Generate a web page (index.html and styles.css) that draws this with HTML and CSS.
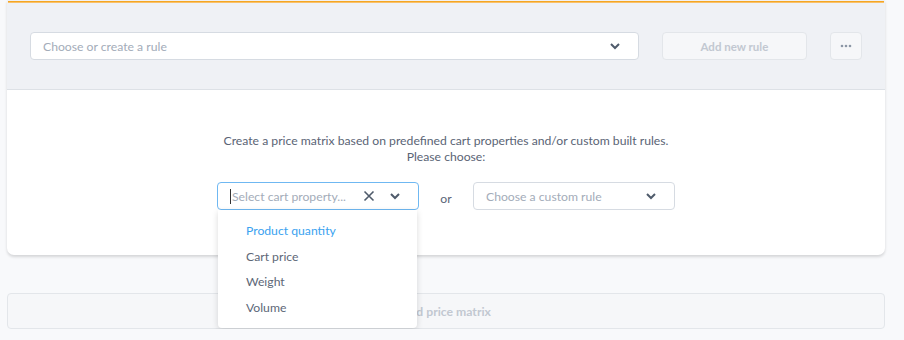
FILE: index.html
```html
<!DOCTYPE html>
<html lang="en">
<head>
  <meta charset="UTF-8" />
  <title>Price matrix</title>
  <link rel="stylesheet" href="styles.css">
</head>
<body>

  <div class="page">
    <div class="card">
      <div class="card-head">
        <div class="accent-line"></div>
        <div class="rule-row">
          <div class="select rule-select">
            <span class="placeholder">Choose or create a rule</span>
            <svg class="chevron" width="12" height="8" viewBox="0 0 12 8"><path d="M2 2l4 4 4-4" fill="none" stroke="#4f5b6b" stroke-width="2"/></svg>
          </div>
          <button class="btn-muted add-rule">Add new rule</button>
          <button class="btn-muted more">
            <svg width="12" height="4" viewBox="0 0 12 4"><circle cx="2" cy="2" r="1.3" fill="#8c97a6"/><circle cx="6" cy="2" r="1.3" fill="#8c97a6"/><circle cx="10" cy="2" r="1.3" fill="#8c97a6"/></svg>
          </button>
        </div>
      </div>

      <div class="card-body">
        <p class="intro">Create a price matrix based on predefined cart properties and/or custom built rules.<br>Please choose:</p>

        <div class="choose-row">
          <div class="select small focused">
            <span class="caret"></span>
            <span class="placeholder">Select cart property...</span>
            <svg class="clear" width="12" height="12" viewBox="0 0 12 12"><path d="M1.5 1.5l9 9M10.5 1.5l-9 9" fill="none" stroke="#4f5b6b" stroke-width="1.6"/></svg>
            <svg class="chevron" width="12" height="8" viewBox="0 0 12 8"><path d="M2 2l4 4 4-4" fill="none" stroke="#4f5b6b" stroke-width="2"/></svg>

            <ul class="menu">
              <li class="active">Product quantity</li>
              <li>Cart price</li>
              <li>Weight</li>
              <li>Volume</li>
            </ul>
          </div>

          <span class="or">or</span>

          <div class="select small">
            <span class="placeholder">Choose a custom rule</span>
            <svg class="chevron" width="12" height="8" viewBox="0 0 12 8"><path d="M2 2l4 4 4-4" fill="none" stroke="#4f5b6b" stroke-width="2"/></svg>
          </div>
        </div>
      </div>
    </div>

    <button class="btn-muted add-matrix">Add price matrix</button>
  </div>

</body>
</html>
```

FILE: styles.css
```css
html, body {
  margin: 0;
  padding: 0;
}

body {
  font-family: 'Lato', 'Open Sans', sans-serif;
  font-size: 12.2px;
  background-color: #f8f9fb;
  color: #5a6475;
}

.page {
  width: 878px;
  padding-left: 7px;
}

.card {
  background: #fff;
  border-radius: 0 0 7px 7px;
  box-shadow: 0 2px 3px rgba(0,0,0,0.14);
}

.card-head {
  background-color: #eff1f5;
  border-bottom: 1px solid #dde1e6;
  padding: 1px 23px 29px;
}

/* orange highlight along the top edge */
.accent-line {
  height: 1px;
  margin: 0 -22px 29px -22px;
  border-top: 1px solid #f5a623;
  background-color: #f8c16a;
}

.rule-row {
  display: flex;
  gap: 23px;
}

.select {
  position: relative;
  display: flex;
  align-items: center;
  height: 28px;
  box-sizing: border-box;
  padding: 0 12px;
  background: #fff;
  border: 1px solid #d6dbe2;
  border-radius: 4px;
}

.rule-select {
  width: 611px;
}

.placeholder {
  flex: 1;
  color: #a3acb9;
  white-space: nowrap;
}

.chevron {
  flex: none;
  margin-right: 5px;
}

.btn-muted {
  font-family: inherit;
  font-size: 11.5px;
  font-weight: 700;
  color: #c2c8d1;
  background-color: #f6f7f9;
  border: 1px solid #e3e6ea;
  border-radius: 4px;
  padding: 0;
  height: 28px;
  cursor: pointer;
}

.add-rule {
  width: 146px;
}

.more {
  display: flex;
  align-items: center;
  justify-content: center;
  width: 32px;
}

.card-body {
  padding: 43px 0 45px;
}

.intro {
  margin: 0 0 17px;
  text-align: center;
  line-height: 16px;
}

.choose-row {
  display: flex;
  justify-content: center;
  align-items: center;
}

.small {
  width: 202px;
}

.focused {
  border-color: #6fb8f2;
  padding-left: 12px;
}

.caret {
  width: 1px;
  height: 15px;
  background: #333;
  margin-right: 1px;
}

.clear {
  flex: none;
  margin-right: 14px;
}

.or {
  width: 54px;
  text-align: center;
  padding-top: 4px;
}

.menu {
  position: absolute;
  left: 0;
  top: 27px;
  width: 199px;
  margin: 0;
  padding: 8px 0;
  list-style: none;
  background: #fff;
  border-radius: 0 0 4px 4px;
  box-shadow: 0 2px 6px rgba(0,0,0,0.15);
  z-index: 2;
}

.menu li {
  line-height: 25.5px;
  padding-left: 28px;
  color: #5d6777;
}

.menu li.active {
  color: #3aa2f0;
}

.add-matrix {
  display: block;
  width: 878px;
  height: 36px;
  margin-top: 38px;
  font-size: 12.2px;
}
```
